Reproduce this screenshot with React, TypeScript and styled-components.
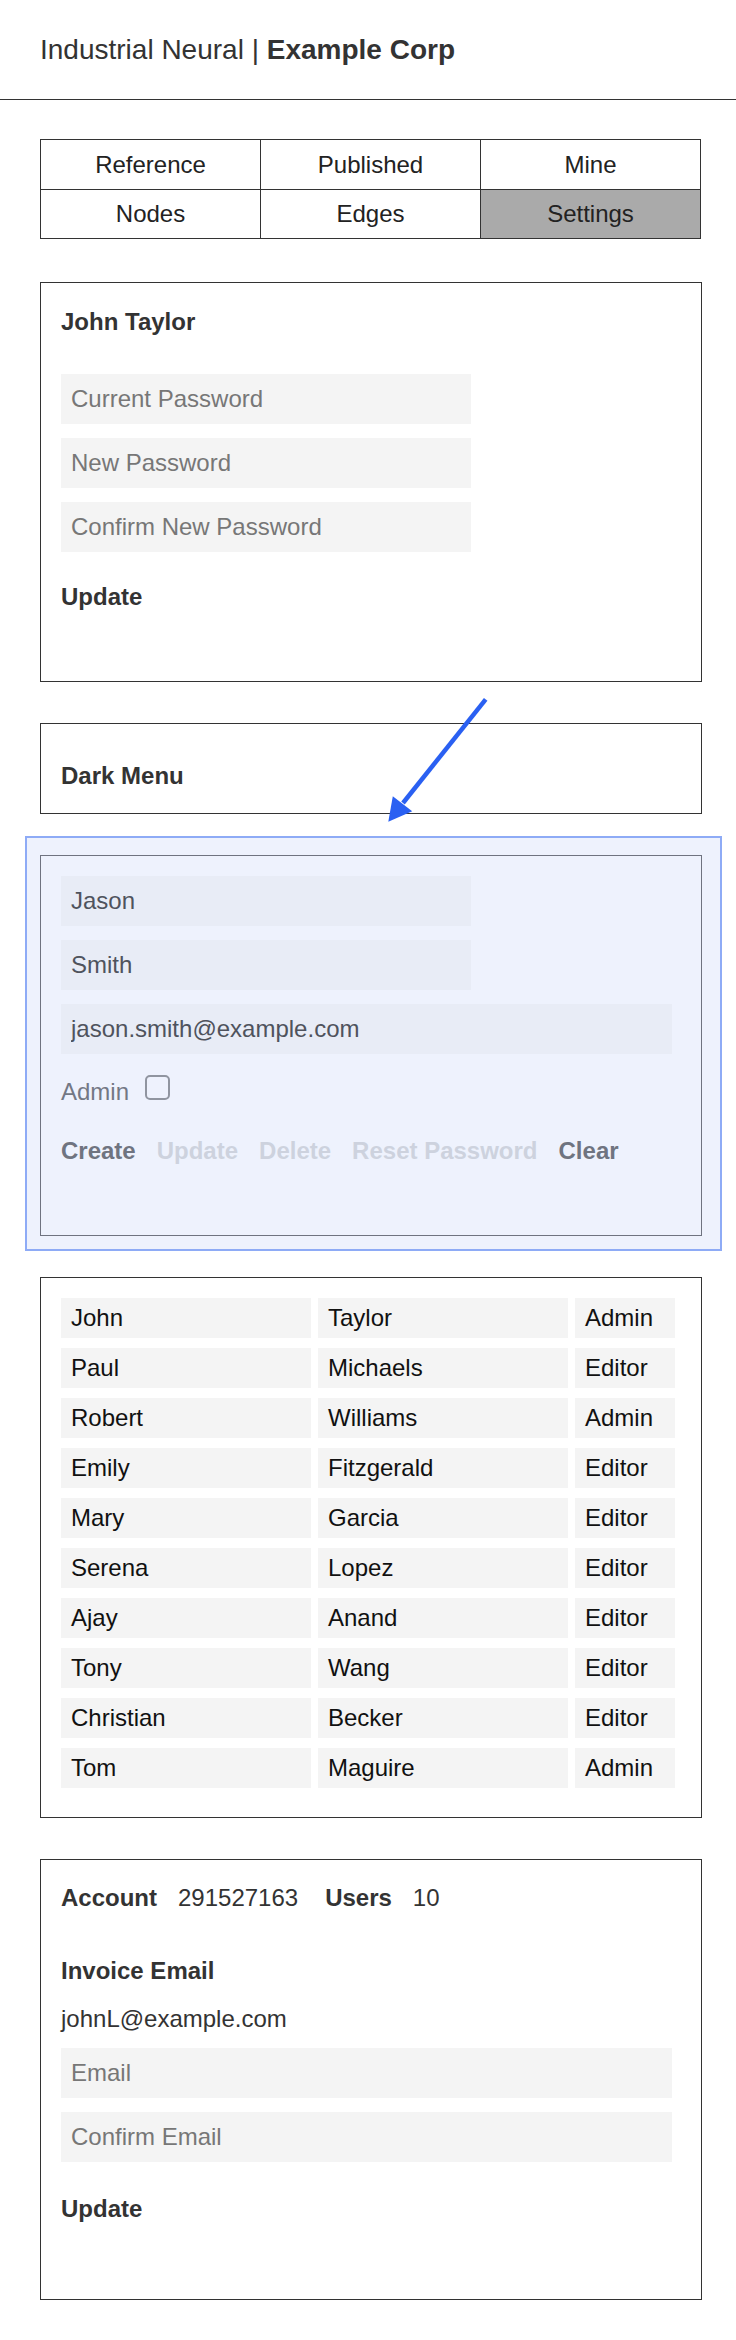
import React from "react";
import styled, { createGlobalStyle } from "styled-components";

const GlobalStyle = createGlobalStyle`
  body {
    margin: 0;
    background: #fff;
    font-family: "Liberation Sans", Arial, Helvetica, sans-serif;
    color: #333;
  }
  * {
    box-sizing: border-box;
  }
`;

const Page = styled.div`
  position: relative;
  width: 736px;
  padding-bottom: 40px;
`;

const Header = styled.header`
  display: flex;
  align-items: center;
  height: 100px;
  padding-left: 40px;
  border-bottom: 1px solid #333;
  font-size: 28px;
  line-height: 32px;
  color: #333;
`;

const Brand = styled.b`
  font-weight: 700;
`;

const Main = styled.main`
  width: 662px;
  margin: 39px 0 0 40px;
`;

const Tabs = styled.nav`
  display: grid;
  grid-template-columns: repeat(3, 1fr);
  width: 661px;
  border-top: 1px solid #333;
  border-left: 1px solid #333;
`;

const Tab = styled.div<{ $active?: boolean }>`
  display: flex;
  align-items: center;
  justify-content: center;
  height: 49.5px;
  padding-top: 1px;
  border-right: 1px solid #333;
  border-bottom: 1px solid #333;
  background: ${(p) => (p.$active ? "#aaaaaa" : "#fff")};
  color: #222;
  font-size: 24px;
  line-height: 28px;
`;

const Stack = styled.div`
  display: flex;
  flex-direction: column;
  gap: 41px;
  margin-top: 43px;
`;

const Card = styled.section<{ $pad: string; $border?: string }>`
  display: flex;
  flex-direction: column;
  align-items: flex-start;
  padding: ${(p) => p.$pad};
  border: 1px solid ${(p) => p.$border || "#333"};
  font-size: 24px;
  line-height: 28px;
`;

const Title = styled.h3`
  margin: 0;
  font-size: 24px;
  line-height: 28px;
  font-weight: 700;
  color: #333;
`;

const Field = styled.input<{ $wide?: boolean; $tint?: boolean; $top?: number }>`
  display: block;
  width: ${(p) => (p.$wide ? "611px" : "410px")};
  height: 50px;
  margin: ${(p) => p.$top ?? 14}px 0 0;
  padding: 0 10px;
  border: none;
  outline: none;
  background: ${(p) => (p.$tint ? "#e8ecf6" : "#f4f4f4")};
  color: ${(p) => (p.$tint ? "#4f535d" : "#333")};
  font-family: inherit;
  font-size: 24px;

  &::placeholder {
    color: #777;
  }
`;

const Action = styled.button<{ $top: number; $tone?: "dark" | "muted" | "faint" }>`
  margin: ${(p) => p.$top}px 0 0;
  padding: 0;
  border: none;
  background: none;
  font-family: inherit;
  font-size: 24px;
  line-height: 28px;
  font-weight: 700;
  cursor: pointer;
  color: ${(p) =>
    p.$tone === "muted" ? "#6f7480" : p.$tone === "faint" ? "#cdd2de" : "#333"};
`;

const Highlight = styled.div`
  margin: -19px -20px -15px -15px;
  padding: 17px 18px 13px 13px;
  border: 2px solid #8eabf6;
  background: #eef2fd;
`;

const CheckRow = styled.label`
  display: flex;
  align-items: flex-start;
  gap: 16px;
  margin-top: 21px;
  color: #737885;
  font-size: 24px;
  line-height: 28px;
`;

const CheckText = styled.span`
  margin-top: 3px;
`;

const Check = styled.input`
  appearance: none;
  width: 25px;
  height: 25px;
  margin: 0;
  border: 2px solid #9095a0;
  border-radius: 5px;
  background: transparent;
`;

const ActionRow = styled.div`
  display: flex;
  gap: 21px;
  margin-top: 31px;
`;

const UserGrid = styled.div`
  display: grid;
  grid-template-columns: 250px 250px 100px;
  column-gap: 7px;
  row-gap: 10px;
`;

const Cell = styled.div`
  display: flex;
  align-items: center;
  height: 40px;
  padding-left: 10px;
  background: #f4f4f4;
  color: #111;
  font-size: 24px;
`;

const InfoRow = styled.div`
  display: flex;
  align-items: baseline;
  color: #333;
`;

const InfoLabel = styled.b`
  margin-right: 21px;
`;

const InfoValue = styled.span`
  margin-right: 27px;
`;

const Spaced = styled.div<{ $top: number }>`
  margin-top: ${(p) => p.$top}px;
  color: #333;
`;

const Arrow = styled.svg`
  position: absolute;
  left: 380px;
  top: 690px;
  width: 120px;
  height: 140px;
  pointer-events: none;
`;

const users = [
  ["John", "Taylor", "Admin"],
  ["Paul", "Michaels", "Editor"],
  ["Robert", "Williams", "Admin"],
  ["Emily", "Fitzgerald", "Editor"],
  ["Mary", "Garcia", "Editor"],
  ["Serena", "Lopez", "Editor"],
  ["Ajay", "Anand", "Editor"],
  ["Tony", "Wang", "Editor"],
  ["Christian", "Becker", "Editor"],
  ["Tom", "Maguire", "Admin"],
];

const tabs = ["Reference", "Published", "Mine", "Nodes", "Edges", "Settings"];

export default function App() {
  return (
    <Page>
      <GlobalStyle />
      <Header>
        Industrial Neural |&nbsp;<Brand>Example Corp</Brand>
      </Header>

      <Main>
        <Tabs>
          {tabs.map((t) => (
            <Tab key={t} $active={t === "Settings"}>
              {t}
            </Tab>
          ))}
        </Tabs>

        <Stack>
          <Card $pad="25px 20px 70px">
            <Title>John Taylor</Title>
            <Field $top={38} type="password" placeholder="Current Password" />
            <Field type="password" placeholder="New Password" />
            <Field type="password" placeholder="Confirm New Password" />
            <Action $top={31}>Update</Action>
          </Card>

          <Card $pad="38px 20px 23px">
            <Title>Dark Menu</Title>
          </Card>

          <Highlight>
            <Card $pad="20px 20px 70px" $border="#6f7380">
              <Field $tint $top={0} defaultValue="Jason" />
              <Field $tint defaultValue="Smith" />
              <Field $tint $wide defaultValue="jason.smith@example.com" />
              <CheckRow>
                <CheckText>Admin</CheckText>
                <Check type="checkbox" />
              </CheckRow>
              <ActionRow>
                <Action $top={0} $tone="muted">Create</Action>
                <Action $top={0} $tone="faint">Update</Action>
                <Action $top={0} $tone="faint">Delete</Action>
                <Action $top={0} $tone="faint">Reset Password</Action>
                <Action $top={0} $tone="muted">Clear</Action>
              </ActionRow>
            </Card>
          </Highlight>

          <Card $pad="20px 20px 29px">
            <UserGrid>
              {users.map((u) =>
                u.map((v, i) => <Cell key={u[0] + i}>{v}</Cell>)
              )}
            </UserGrid>
          </Card>

          <Card $pad="24px 20px 76px">
            <InfoRow>
              <InfoLabel>Account</InfoLabel>
              <InfoValue>291527163</InfoValue>
              <InfoLabel>Users</InfoLabel>
              <span>10</span>
            </InfoRow>
            <Spaced $top={45}>
              <Title>Invoice Email</Title>
            </Spaced>
            <Spaced $top={20}>johnL@example.com</Spaced>
            <Field $wide $top={15} placeholder="Email" />
            <Field $wide placeholder="Confirm Email" />
            <Action $top={33}>Update</Action>
          </Card>
        </Stack>
      </Main>

      <Arrow viewBox="380 690 120 140">
        <line
          x1="485.7"
          y1="699.3"
          x2="403"
          y2="803"
          stroke="#2a60f2"
          strokeWidth="4.5"
        />
        <polygon points="388.3,821.7 392.8,796.2 412.2,811.2" fill="#2a60f2" />
      </Arrow>
    </Page>
  );
}
